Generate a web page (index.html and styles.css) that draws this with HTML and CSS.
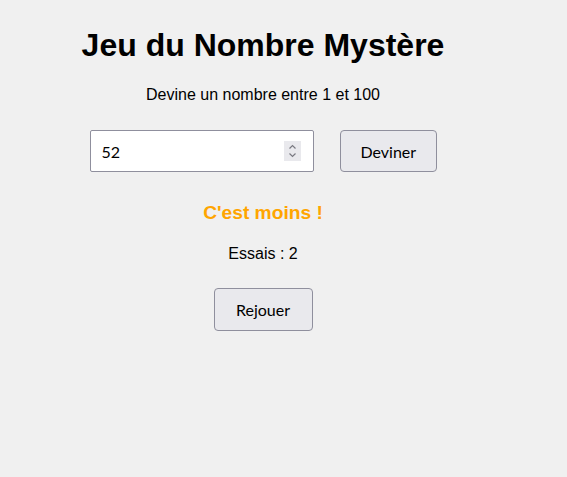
FILE: index.html
```html
<!DOCTYPE html>
<html lang="fr">
<head>
  <meta charset="UTF-8" />
  <meta name="viewport" content="width=device-width, initial-scale=1.0"/>
  <title>Jeu du Nombre Mystère</title>
  <link rel="stylesheet" href="styles.css">
</head>
<body>
  <main class="game">
    <h1>Jeu du Nombre Mystère</h1>
    <p class="hint">Devine un nombre entre 1 et 100</p>

    <form id="guessForm" class="guess-row">
      <div class="field">
        <input type="number" id="guess" min="1" max="100" value="52">
        <!-- spinner drawn by hand so it looks the same everywhere -->
        <span class="spin">
          <svg width="17" height="20" viewBox="0 0 17 20">
            <path d="M5.5 7.5 L8.5 4.5 L11.5 7.5" fill="none" stroke="#7a7a82" stroke-width="1.2"/>
            <path d="M5.5 12.5 L8.5 15.5 L11.5 12.5" fill="none" stroke="#7a7a82" stroke-width="1.2"/>
          </svg>
        </span>
      </div>
      <button type="submit">Deviner</button>
    </form>

    <p id="result" class="result">C'est moins !</p>
    <p class="tries">Essais : <span id="tries">2</span></p>

    <button type="button" id="replay">Rejouer</button>
  </main>

  <script>
    let secret = Math.floor(Math.random() * 100) + 1;
    let tries = 2;
    const form = document.getElementById('guessForm');
    const result = document.getElementById('result');
    const triesEl = document.getElementById('tries');

    form.addEventListener('submit', (e) => {
      e.preventDefault();
      const n = parseInt(document.getElementById('guess').value, 10);
      if (isNaN(n)) return;
      tries++;
      triesEl.textContent = tries;
      if (n > secret) result.textContent = "C'est moins !";
      else if (n < secret) result.textContent = "C'est plus !";
      else result.textContent = 'Bravo, tu as trouvé !';
    });

    document.getElementById('replay').addEventListener('click', () => {
      secret = Math.floor(Math.random() * 100) + 1;
      tries = 0;
      triesEl.textContent = tries;
      result.textContent = '';
      document.getElementById('guess').value = '';
    });
  </script>
</body>
</html>
```

FILE: styles.css
```css
* {
  box-sizing: border-box;
}

body {
  margin: 0;
  background: #f0f0f0;
  color: #000;
  font-family: 'Liberation Sans', Arial, sans-serif;
}

.game {
  width: 510px;
  margin-left: 8px;
  padding-top: 27px;
  display: flex;
  flex-direction: column;
  align-items: center;
  text-align: center;
}

h1 {
  font-size: 32px;
  margin: 0 0 22px 0;
}

.hint {
  font-size: 16px;
  margin: 0 0 26px 0;
}

.guess-row {
  display: flex;
  gap: 26px;
  margin: 0 0 30px 0;
}

.field {
  position: relative;
}

.field input {
  width: 224px;
  height: 42px;
  padding: 0 11px;
  border: 1px solid #8f8f9d;
  border-radius: 2px;
  background: #fff;
  font-family: Lato, 'Noto Sans', sans-serif;
  font-size: 16px;
  color: #000;
  -moz-appearance: textfield;
}

.field input::-webkit-inner-spin-button,
.field input::-webkit-outer-spin-button {
  -webkit-appearance: none;
  margin: 0;
}

.spin {
  position: absolute;
  top: 11px;
  right: 13px;
  width: 17px;
  height: 20px;
  background: #e9e9ed;
  pointer-events: none;
}

.spin svg {
  display: block;
}

button {
  height: 42px;
  padding: 0 20px;
  border: 1px solid #8f8f9d;
  border-radius: 4px;
  background: #e9e9ed;
  font-family: Lato, 'Noto Sans', sans-serif;
  font-size: 16px;
  color: #000;
  cursor: pointer;
}

button:hover {
  background: #d0d0d7;
}

.guess-row button {
  width: 97px;
}

.result {
  color: #ffa500;
  font-weight: bold;
  font-size: 19.2px;
  margin: 0 0 21px 0;
}

.tries {
  font-size: 16px;
  margin: 0 0 25px 0;
}

#replay {
  width: 99px;
  height: 43px;
}
```
